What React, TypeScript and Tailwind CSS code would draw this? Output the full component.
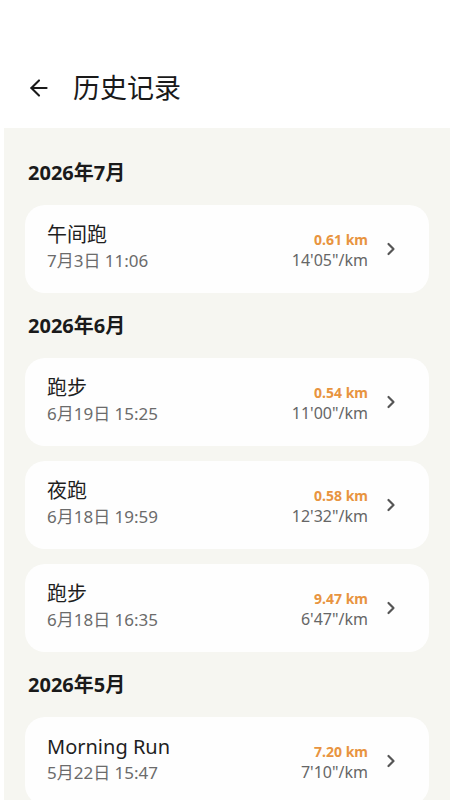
import { ArrowLeft, ChevronRight } from 'lucide-react';

type Run = { title: string; date: string; km: string; pace: string };

const GROUPS: { month: string; runs: Run[] }[] = [
  {
    month: '2026年7月',
    runs: [{ title: '午间跑', date: '7月3日 11:06', km: '0.61 km', pace: `14'05"/km` }],
  },
  {
    month: '2026年6月',
    runs: [
      { title: '跑步', date: '6月19日 15:25', km: '0.54 km', pace: `11'00"/km` },
      { title: '夜跑', date: '6月18日 19:59', km: '0.58 km', pace: `12'32"/km` },
      { title: '跑步', date: '6月18日 16:35', km: '9.47 km', pace: `6'47"/km` },
    ],
  },
  {
    month: '2026年5月',
    runs: [{ title: 'Morning Run', date: '5月22日 15:47', km: '7.20 km', pace: `7'10"/km` }],
  },
];

const FONT = "font-['Noto_Sans','Noto_Sans_CJK_SC',sans-serif]";

function RunCard({ run }: { run: Run }) {
  return (
    <div className="flex h-[88px] items-center rounded-[20px] bg-[#fefefe] pl-[22px] pr-[28px]">
      <div className="-mt-[4px] flex min-w-0 flex-grow flex-col">
        <div className="text-[20px] leading-[26px] text-[#1f1f1f]">{run.title}</div>
        <div className="mt-[2px] text-[17px] leading-[22px] text-[#6b6b6b]">{run.date}</div>
      </div>
      <div className="flex flex-col items-end pt-[2px]">
        <div className="text-[14px] font-bold leading-[18px] text-[#e89440]">{run.km}</div>
        <div className="mt-[1px] text-[16px] leading-[20px] text-[#666]">{run.pace}</div>
      </div>
      <ChevronRight className="ml-[13px] text-[#555]" size={20} strokeWidth={2.6} />
    </div>
  );
}

export default function App() {
  return (
    <div className={`${FONT} flex min-h-[800px] w-[450px] flex-col bg-white`}>
      {/* header */}
      <div className="flex h-[128px] items-center pl-[26px] pt-[48px]">
        <ArrowLeft className="text-[#1a1a1a]" size={26} strokeWidth={1.9} />
        <h1 className="ml-[21px] text-[27px] leading-[34px] text-[#1a1a1a]">历史记录</h1>
      </div>

      {/* list */}
      <div className="ml-[4px] flex-grow bg-[#f6f6f1] px-[21px] pt-[32px]">
        {GROUPS.map((g, i) => (
          <div key={g.month} className={i > 0 ? 'mt-[20px]' : ''}>
            <div className="pl-[3px] text-[20px] font-bold leading-[26px] text-[#1a1a1a]">{g.month}</div>
            <div className="mt-[19px] flex flex-col gap-[15px]">
              {g.runs.map((r, j) => (
                <RunCard key={j} run={r} />
              ))}
            </div>
          </div>
        ))}
      </div>
    </div>
  );
}
